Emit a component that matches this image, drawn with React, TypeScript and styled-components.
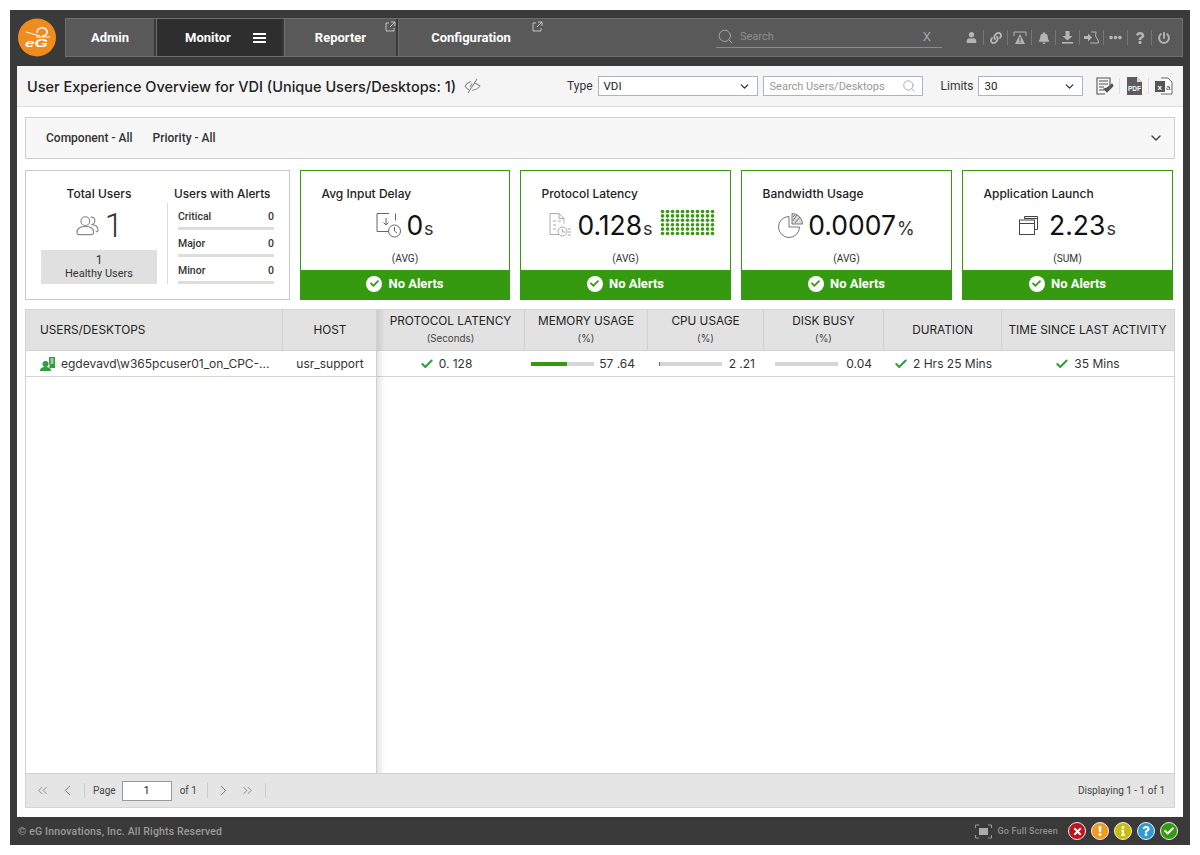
import React from "react";
import styled, { createGlobalStyle } from "styled-components";
import { Check, ChevronDown, ChevronLeft, ChevronRight, ChevronsLeft, ChevronsRight, Search as SearchIcon } from "lucide-react";
import { FaUser, FaLink, FaBell, FaEllipsisH, FaQuestion, FaPowerOff, FaCheck, FaTimes, FaExclamation, FaInfo } from "react-icons/fa";

const Global = createGlobalStyle`
  html, body { margin: 0; padding: 0; background: #fff; overflow: hidden; }
  body { font-family: Roboto, "Liberation Sans", sans-serif; color: #222; }
  * { box-sizing: border-box; }
`;

const Wide = `Inter, Roboto, "Liberation Sans", sans-serif`;

const Frame = styled.div`
  margin: 10px;
  width: 1180px;
  height: 835px;
  background: #3a3a3a;
  padding: 8px 7px 0;
  display: flex;
  flex-direction: column;
`;

const TopRow = styled.header`
  display: flex;
  align-items: center;
  height: 39px;
  gap: 7px;
  flex: none;
`;

const LogoWrap = styled.div`
  width: 40px;
  height: 39px;
  flex: none;
  margin-left: 1px;
`;

const NavBar = styled.nav`
  flex: 1;
  min-width: 0;
  height: 39px;
  background: #595959;
  border: 1px solid #6e6e6e;
  display: flex;
  align-items: stretch;
`;

const Tab = styled.div<{ $w: number; $active?: boolean; $plain?: boolean; $pl?: number }>`
  position: relative;
  width: ${(p) => p.$w}px;
  flex: none;
  display: flex;
  align-items: center;
  justify-content: center;
  gap: 22px;
  padding-left: ${(p) => p.$pl ?? 0}px;
  color: #fff;
  font-size: 13px;
  font-weight: 700;
  background: ${(p) => (p.$active ? "#2e2e2e" : "transparent")};
  border-right: ${(p) => (p.$plain ? "none" : "2px solid #383838")};
  box-shadow: ${(p) => (p.$plain ? "none" : "1px 0 0 #6e6e6e")};
  margin-right: 1px;
`;

const ExtIcon = styled.svg`
  position: absolute;
  top: 2px;
  right: 0;
  width: 11px;
  height: 11px;
`;

const Burger = styled.span`
  display: block;
  width: 13px;
  height: 10px;
  border-top: 2px solid #fff;
  border-bottom: 2px solid #fff;
  position: relative;
  &::after {
    content: "";
    position: absolute;
    left: 0;
    right: 0;
    top: 2px;
    height: 2px;
    background: #fff;
  }
`;

const SearchBox = styled.div`
  margin-left: 172px;
  width: 226px;
  height: 29px;
  display: flex;
  align-items: center;
  border-bottom: 1px solid #8a8a8a;
  padding: 6px 8px 0 1px;
  color: #8f8f8f;
  font-size: 11px;
  gap: 6px;
`;

const SearchPlaceholder = styled.span`
  flex: 1;
`;

const ClearX = styled.span`
  font-size: 13px;
  color: #a5a5a5;
  margin-right: 3px;
`;

const ToolIcons = styled.div`
  display: flex;
  align-items: center;
  margin-left: 18px;
  flex: none;
`;

const ToolCell = styled.div<{ $last?: boolean }>`
  width: 24px;
  height: 15px;
  display: flex;
  align-items: center;
  justify-content: center;
  color: #b5b5b5;
  border-right: ${(p) => (p.$last ? "none" : "1px solid #777")};
`;

const Content = styled.main`
  margin-top: 9px;
  height: 751px;
  flex: none;
  background: #fff;
  display: flex;
  flex-direction: column;
`;

const TitleBar = styled.div`
  height: 41px;
  flex: none;
  background: #f5f5f5;
  border-bottom: 1px solid #dcdcdc;
  display: flex;
  align-items: center;
  padding: 0 0 0 10px;
  font-size: 12px;
`;

const Title = styled.h1`
  margin: 0;
  font-family: ${Wide};
  width: 430px;
  font-size: 14.5px;
  font-weight: 500;
  color: #222;
  white-space: nowrap;
`;

const Eye = styled.span`
  display: inline-flex;
  margin-left: 7px;
`;

const FieldLabel = styled.label<{ $ml: number }>`
  margin-left: ${(p) => p.$ml}px;
  font-size: 12px;
  color: #333;
`;

const Select = styled.div<{ $w: number }>`
  width: ${(p) => p.$w}px;
  height: 20px;
  margin-left: 5px;
  background: #fff;
  border: 1px solid #aab4c4;
  display: flex;
  align-items: center;
  justify-content: space-between;
  padding: 0 6px 0 5px;
  font-size: 11.5px;
  color: #222;
`;

const SearchField = styled.div`
  width: 160px;
  height: 20px;
  margin-left: 5px;
  background: #fff;
  border: 1px solid #aab4c4;
  display: flex;
  align-items: center;
  justify-content: space-between;
  padding: 0 6px;
  font-size: 11px;
  color: #999;
`;

const Exports = styled.div`
  display: flex;
  align-items: center;
  margin-left: 8px;
`;

const ExportCell = styled.div<{ $last?: boolean }>`
  width: 29px;
  height: 16px;
  display: flex;
  align-items: center;
  justify-content: center;
  border-right: ${(p) => (p.$last ? "none" : "1px solid #ddd")};
`;

const Body = styled.div`
  flex: 1;
  padding: 10px 8px 9px;
  display: flex;
  flex-direction: column;
  min-height: 0;
`;

const FilterBar = styled.div`
  height: 42px;
  flex: none;
  background: #f7f7f7;
  border: 1px solid #d0d0d0;
  display: flex;
  align-items: center;
  padding: 0 10px 0 20px;
  gap: 20px;
  font-size: 12px;
  font-weight: 500;
  color: #333;
`;

const FilterSpacer = styled.span`
  flex: 1;
`;

const Cards = styled.section`
  margin-top: 11px;
  height: 129px;
  flex: none;
  display: grid;
  grid-template-columns: 265px 210px 211px 211px 211px;
  gap: 10px;
  width: 1148px;
`;

const SummaryCard = styled.div`
  border: 1px solid #c8c8c8;
  display: flex;
  padding: 15px;
`;

const SummaryLeft = styled.div`
  width: 116px;
  display: flex;
  flex-direction: column;
  align-items: center;
`;

const CardHead = styled.div`
  font-family: ${Wide};
  font-size: 12px;
  font-weight: 500;
  color: #222;
  line-height: 16px;
  white-space: nowrap;
`;

const TotalRow = styled.div`
  display: flex;
  align-items: center;
  gap: 5px;
  height: 39px;
  margin-top: 4px;
  color: #8a8a8a;
`;

const TotalNum = styled.span`
  font-size: 33px;
  font-weight: 300;
  color: #333;
  line-height: 1;
`;

const Healthy = styled.div`
  margin-top: auto;
  width: 116px;
  height: 34px;
  background: #e0e0e0;
  display: flex;
  flex-direction: column;
  align-items: center;
  justify-content: center;
  font-size: 11px;
  color: #333;
  line-height: 14px;
`;

const HealthyNum = styled.span`
  font-size: 12px;
`;

const SummaryRight = styled.div`
  flex: 1;
  margin-left: 10px;
  display: flex;
  flex-direction: column;
`;

const AlertHead = styled(CardHead)`
  margin-left: 7px;
  font-size: 11.8px;
`;

const AlertList = styled.div`
  flex: 1;
  border-left: 1px solid #ddd;
  padding-left: 10px;
  margin-top: 1px;
  display: flex;
  flex-direction: column;
  justify-content: flex-end;
`;

const AlertRow = styled.div`
  height: 27px;
  display: flex;
  justify-content: space-between;
  align-items: center;
  font-size: 10.5px;
  font-weight: 500;
  color: #333;
  border-bottom: 3px solid #ddd;
  padding-top: 3px;
`;

const MetricCard = styled.div`
  border: 1px solid #359a10;
  display: flex;
  flex-direction: column;
`;

const MetricHead = styled(CardHead)`
  padding: 15px 0 0 20.500px;
  flex: none;
`;

const MetricValue = styled.div<{ $pl?: number }>`
  flex: none;
  height: 38px;
  margin-top: 4px;
  padding-left: ${(p) => p.$pl ?? 0}px;
  display: flex;
  align-items: center;
  justify-content: center;
  gap: 5px;
`;

const BigNum = styled.span`
  font-family: ${Wide};
  font-size: 26.5px;
  font-weight: 400;
  color: #111;
  line-height: 1;
`;

const Unit = styled.span`
  font-size: 18px;
  color: #333;
  margin-left: 1px;
`;

const DotsWrap = styled.span`
  display: inline-flex;
  margin: 0 0 6px 2px;
`;

const Agg = styled.div`
  flex: none;
  margin-top: 8px;
  text-align: center;
  font-size: 10.2px;
  line-height: 13px;
  color: #333;
`;

const AlertBand = styled.div`
  margin-top: auto;
  height: 29px;
  padding-bottom: 2px;
  background: #359a10;
  display: flex;
  align-items: center;
  justify-content: center;
  gap: 6px;
  color: #fff;
  font-size: 13px;
  font-weight: 700;
`;

const CheckDisc = styled.span`
  width: 16px;
  height: 16px;
  border-radius: 50%;
  background: #fff;
  color: #359a10;
  display: inline-flex;
  align-items: center;
  justify-content: center;
`;

const Grid = styled.section`
  margin-top: 10px;
  flex: 1;
  min-height: 0;
  border: 1px solid #d4d4d4;
  display: flex;
  flex-direction: column;
  width: 1150px;
`;

const GridBody = styled.div`
  flex: 1;
  min-height: 0;
  display: flex;
`;

const LeftPane = styled.div`
  width: 351px;
  flex: none;
  border-right: 1px solid #cfcfcf;
`;

const RightPane = styled.div`
  flex: 1;
  min-width: 0;
  position: relative;
  &::before {
    content: "";
    position: absolute;
    top: 0;
    bottom: 0;
    left: 0;
    width: 8px;
    background: linear-gradient(to right, rgba(0, 0, 0, 0.1), rgba(0, 0, 0, 0));
    pointer-events: none;
  }
`;

const HeadRow = styled.div<{ $cols: string }>`
  display: grid;
  grid-template-columns: ${(p) => p.$cols};
  height: 41px;
  background: #e2e2e2;
  border-bottom: 1px solid #d4d4d4;
`;

const HeadCell = styled.div<{ $left?: boolean; $last?: boolean }>`
  display: flex;
  flex-direction: column;
  justify-content: center;
  align-items: ${(p) => (p.$left ? "flex-start" : "center")};
  padding-left: ${(p) => (p.$left ? "14px" : "0")};
  border-right: ${(p) => (p.$last ? "none" : "1px solid #d0d0d0")};
  font-family: ${Wide};
  font-size: 11.8px;
  color: #222;
  white-space: nowrap;
  line-height: 17px;
`;

const HeadSub = styled.span`
  font-size: 9.8px;
  color: #444;
`;

const DataRow = styled.div<{ $cols: string }>`
  display: grid;
  grid-template-columns: ${(p) => p.$cols};
  height: 26px;
  border-bottom: 1px solid #d4d4d4;
  font-family: ${Wide};
  font-size: 12px;
  color: #333;
`;

const DataCell = styled.div<{ $center?: boolean; $pl?: number; $pr?: number }>`
  display: flex;
  align-items: center;
  justify-content: ${(p) => (p.$center ? "center" : "flex-start")};
  padding-left: ${(p) => p.$pl ?? 0}px;
  padding-right: ${(p) => p.$pr ?? 0}px;
  gap: 5px;
  white-space: nowrap;
`;

const Track = styled.div`
  width: 63px;
  height: 4px;
  background: #d6d6d6;
  flex: none;
`;

const Fill = styled.div`
  height: 100%;
  background: #359a10;
`;

const BarValue = styled.span`
  flex: 1;
  text-align: right;
`;

const TickMark = styled.span`
  display: inline-flex;
  color: #2e9e3f;
`;

const Pager = styled.footer`
  height: 34px;
  flex: none;
  background: #e5e5e5;
  border-top: 1px solid #d0d0d0;
  display: flex;
  align-items: center;
  padding-left: 9px;
  color: #8a8a8a;
  font-size: 10px;
`;

const PagerBtn = styled.span<{ $w: number }>`
  width: ${(p) => p.$w}px;
  display: inline-flex;
  justify-content: center;
  color: #777;
`;

const PagerSep = styled.span<{ $ml?: number; $mr?: number }>`
  width: 1px;
  height: 15px;
  background: #ccc;
  margin: 0 ${(p) => p.$mr ?? 0}px 0 ${(p) => p.$ml ?? 0}px;
`;

const PagerText = styled.span`
  color: #444;
`;

const PageInput = styled.div`
  width: 50px;
  height: 20px;
  margin: 0 8px 0 6px;
  background: #fff;
  border: 1px solid #999;
  display: flex;
  align-items: center;
  justify-content: center;
  font-size: 11px;
  color: #222;
`;

const Showing = styled.span`
  margin-left: auto;
  padding-right: 9px;
  color: #444;
`;

const Foot = styled.footer`
  flex: 1;
  display: flex;
  align-items: center;
  padding: 0 5px 0 1px;
  font-size: 10.5px;
  font-weight: 500;
  color: #9a9a9a;
  letter-spacing: 0.17px;
`;

const FullScreen = styled.span`
  margin-left: auto;
  display: inline-flex;
  align-items: center;
  gap: 6px;
  font-size: 9px;
  color: #8f8f8f;
  margin-right: 5px;
`;

const Status = styled.span<{ $bg: string }>`
  width: 18px;
  height: 18px;
  border-radius: 50%;
  background: ${(p) => p.$bg};
  border: 1px solid #eee;
  color: #fff;
  display: inline-flex;
  align-items: center;
  justify-content: center;
  margin-left: 5px;
`;

const Logo = () => (
  <LogoWrap>
    <svg width="40" height="39" viewBox="0 0 40 39">
      <circle cx="19" cy="19.500" r="19" fill="#f08c1e" />
      <path d="M19 15 C19 9 27 8 29 13 C30 16 27 18 24 18" stroke="#fff" strokeWidth="1.500" fill="none" />
      <path d="M8 14 L22 18 M18 19 H32" stroke="#fff" strokeWidth="1" fill="none" />
      <text x="7" y="29" fontFamily="Liberation Sans, sans-serif" fontWeight="700" fontStyle="italic" fontSize="11" textLength="23" lengthAdjust="spacingAndGlyphs" fill="#fff">eG</text>
    </svg>
  </LogoWrap>
);

const Ext = () => (
  <ExtIcon viewBox="0 0 11 11" fill="none" stroke="#ccc" strokeWidth="0.9">
    <path d="M4 2H1v8h8V7M6 1h4v4M10 1L5 6" />
  </ExtIcon>
);

const EyeSlash = () => (
  <svg width="17" height="16" viewBox="0 0 17 16" fill="none" stroke="#8a8a8a" strokeWidth="1.100">
    <path d="M7 3.500C4 4.500 2 6.500 1 8c1 1.500 2 2.800 4 3.700" />
    <path d="M10 4.500c2.500 1 4.500 2.500 6 3.500-2 2.300-4.500 4-8 4.200" />
    <path d="M13 1L4 15" />
    <path d="M8 5.500L6 9" />
  </svg>
);

const WarnBox = () => (
  <svg width="14" height="14" viewBox="0 0 14 14" fill="none">
    <path d="M1 5V1h12v4" stroke="#b5b5b5" />
    <path d="M7 3l5 10H2z" fill="#b5b5b5" />
    <rect x="6.400" y="6" width="1.200" height="4" fill="#595959" />
    <rect x="6.400" y="10.600" width="1.200" height="1.200" fill="#595959" />
  </svg>
);

const DownloadI = () => (
  <svg width="13" height="13" viewBox="0 0 13 13" fill="#b5b5b5">
    <path d="M4.500 0h4v5h3L6.500 9.500 1.500 5h3z" />
    <rect x="1" y="11" width="11" height="1.600" />
  </svg>
);

const LoginI = () => (
  <svg width="16" height="13" viewBox="0 0 16 13" fill="none">
    <path d="M0 5h4V2.500L8 6.500l-4 4V8H0z" fill="#b5b5b5" />
    <path d="M7 1h5l-.5 4 3 5v2H6" stroke="#b5b5b5" strokeWidth="1" />
  </svg>
);

const UsersI = () => (
  <svg width="25" height="21" viewBox="0 0 27 24" fill="none" stroke="#8a8a8a" strokeWidth="1.300">
    <circle cx="11" cy="7" r="5" />
    <path d="M1.500 20c0-5 4-7 9.500-7s9.500 2 9.500 7c0 2-1 2.500-3 2.500H4.500c-2 0-3-.5-3-2.500z" />
    <path d="M17 2.500c3-.5 5 1 5 4 0 2-1 3.500-3 4.500 4 .5 6.500 3 6.500 6 0 1.500-1 2-2.500 2" />
  </svg>
);

const DelayI = () => (
  <svg width="25" height="25" viewBox="0 0 25 25" fill="none" stroke="#666" strokeWidth="1">
    <path d="M13 .5H1v18h11" />
    <path d="M10 5v7M7.500 9.500L10 12l2.500-2.500" />
    <path d="M19.500 .5v7" />
    <circle cx="18.500" cy="18" r="6" />
    <path d="M18.500 14v4l2.500 2" />
  </svg>
);

const LatencyI = () => (
  <svg width="24" height="25" viewBox="0 0 24 25" fill="none" stroke="#aaa" strokeWidth="1">
    <path d="M2 .5h9l5 5v5M2 .5v21h9" />
    <path d="M11 .5v5h5M5 8h3M5 12h3M5 16h3M10 8h3" />
    <circle cx="14.500" cy="18.500" r="4.500" />
    <path d="M14.500 16v3h3M20 16h3M20 19h3M20 22h3" />
  </svg>
);

const PieI = () => (
  <svg width="25" height="25" viewBox="0 0 25 25" fill="none" stroke="#777" strokeWidth="1">
    <path d="M11 3.500A10.500 10.500 0 1 0 21.500 14H11z" />
    <path d="M14 .5A10.500 10.500 0 0 1 24.500 11H14z" fill="#ddd" />
    <path d="M15 8l4-6M17 10l5-6M15 4l2-2" />
  </svg>
);

const WindowsI = () => (
  <svg width="25" height="19" viewBox="0 0 25 19" fill="none" stroke="#444" strokeWidth="1">
    <path d="M5.500 3V.5h13v13H16" />
    <rect x=".5" y="4" width="15" height="14.500" />
    <path d="M.5 7.500h15M5.500 2.500h13" />
  </svg>
);

const Dots = () => (
  <DotsWrap>
    <svg width="55" height="27" viewBox="0 0 55 27">
      {Array.from({ length: 6 }).flatMap((_, r) =>
        Array.from({ length: 11 }).map((_, c) => (
          <circle key={`${r}-${c}`} cx={2.500 + c * 5} cy={2.500 + r * 4.400} r="1.800" fill="#359a10" />
        ))
      )}
    </svg>
  </DotsWrap>
);

const UserRowI = () => (
  <svg width="16" height="16" viewBox="0 0 16 16" fill="#2e9e3f">
    <circle cx="5.500" cy="8" r="3" />
    <path d="M0 15c0-3 2-4 5.500-4s5.500 1 5.500 4z" />
    <path d="M9 1h6v11H9.500V8H9z" />
    <path d="M10.500 3h3M10.500 5h3M10.500 7h3" stroke="#fff" strokeWidth="1" />
  </svg>
);

const ExportNote = () => (
  <svg width="18" height="18" viewBox="0 0 18 18" fill="none" stroke="#555" strokeWidth="1.100">
    <path d="M14 8V1H1v16h8" />
    <path d="M3 4h9M3 7h9M3 10h5M3 13h5" />
    <path d="M8 12l3 3 6-6-1-2-5 4z" fill="#555" />
  </svg>
);

const ExportPdf = () => (
  <svg width="15" height="18" viewBox="0 0 15 18">
    <path d="M0 0h10l5 5v13H0z" fill="#5c5c5c" />
    <path d="M10 0v5h5z" fill="#ddd" />
    <text x="1" y="14" fontFamily="Liberation Sans, sans-serif" fontSize="6.500" fontWeight="700" fill="#fff">PDF</text>
  </svg>
);

const ExportXls = () => (
  <svg width="18" height="18" viewBox="0 0 18 18">
    <path d="M6 1h7l4 4v12H6" fill="#fff" stroke="#666" />
    <rect x="0" y="4" width="10" height="11" fill="#555" />
    <text x="2.500" y="12.500" fontFamily="Liberation Sans, sans-serif" fontSize="8" fontWeight="700" fill="#fff">x</text>
    <text x="11" y="13" fontFamily="Liberation Sans, sans-serif" fontSize="8" fill="#444">a</text>
  </svg>
);

const FullI = () => (
  <svg width="17" height="15" viewBox="0 0 17 15" fill="none" stroke="#999">
    <path d="M4 1H.5v3M13 1h3.500v3M4 14H.5v-3M13 14h3.500v-3" />
    <rect x="4" y="4" width="9" height="7" fill="#aaa" stroke="none" />
  </svg>
);

const Tick = () => (
  <TickMark>
    <Check size={14} strokeWidth={3.5} />
  </TickMark>
);

const BarCell = ({ pct, value, pl, pr }: { pct: number; value: string; pl: number; pr: number }) => (
  <DataCell $pl={pl} $pr={pr}>
    <Track>
      <Fill style={{ width: `${pct}%` }} />
    </Track>
    <BarValue>{value}</BarValue>
  </DataCell>
);

const leftCols = "257px 94px";
const rightCols = "148px 123px 116px 120px 118px 171px";

const metrics = [
  { title: "Avg Input Delay", num: "0", unit: "s", agg: "(AVG)", icon: <DelayI /> },
  { title: "Protocol Latency", num: "0.128", unit: "s", agg: "(AVG)", icon: <LatencyI />, dots: true },
  { title: "Bandwidth Usage", num: "0.0007", unit: "%", agg: "(AVG)", icon: <PieI /> },
  { title: "Application Launch", num: "2.23", unit: "s", agg: "(SUM)", icon: <WindowsI /> },
];

export default function App() {
  return (
    <>
      <Global />
      <Frame>
        <TopRow>
          <Logo />
          <NavBar>
            <Tab $w={90}>Admin</Tab>
            <Tab $w={127} $active $pl={12}>
              <span>Monitor</span>
              <Burger />
            </Tab>
            <Tab $w={113}>
              <span>Reporter</span>
              <Ext />
            </Tab>
            <Tab $w={144} $plain>
              <span>Configuration</span>
              <Ext />
            </Tab>
            <SearchBox>
              <SearchIcon size={17} strokeWidth={1.2} color="#b0b0b0" />
              <SearchPlaceholder>Search</SearchPlaceholder>
              <ClearX>X</ClearX>
            </SearchBox>
            <ToolIcons>
              <ToolCell><FaUser size={11} /></ToolCell>
              <ToolCell><FaLink size={12} /></ToolCell>
              <ToolCell><WarnBox /></ToolCell>
              <ToolCell><FaBell size={12} /></ToolCell>
              <ToolCell><DownloadI /></ToolCell>
              <ToolCell><LoginI /></ToolCell>
              <ToolCell><FaEllipsisH size={13} /></ToolCell>
              <ToolCell><FaQuestion size={12} /></ToolCell>
              <ToolCell $last><FaPowerOff size={12} /></ToolCell>
            </ToolIcons>
          </NavBar>
        </TopRow>

        <Content>
          <TitleBar>
            <Title>User Experience Overview for VDI (Unique Users/Desktops: 1)</Title>
            <Eye><EyeSlash /></Eye>
            <FieldLabel $ml={86}>Type</FieldLabel>
            <Select $w={160}>
              VDI
              <ChevronDown size={13} strokeWidth={2.5} color="#333" />
            </Select>
            <SearchField>
              Search Users/Desktops
              <SearchIcon size={14} strokeWidth={1.3} color="#999" />
            </SearchField>
            <FieldLabel $ml={18}>Limits</FieldLabel>
            <Select $w={105}>
              30
              <ChevronDown size={13} strokeWidth={2.5} color="#333" />
            </Select>
            <Exports>
              <ExportCell><ExportNote /></ExportCell>
              <ExportCell><ExportPdf /></ExportCell>
              <ExportCell $last><ExportXls /></ExportCell>
            </Exports>
          </TitleBar>

          <Body>
            <FilterBar>
              <span>Component - All</span>
              <span>Priority - All</span>
              <FilterSpacer />
              <ChevronDown size={16} strokeWidth={2.2} color="#444" />
            </FilterBar>

            <Cards>
              <SummaryCard>
                <SummaryLeft>
                  <CardHead>Total Users</CardHead>
                  <TotalRow>
                    <UsersI />
                    <TotalNum>1</TotalNum>
                  </TotalRow>
                  <Healthy>
                    <HealthyNum>1</HealthyNum>
                    Healthy Users
                  </Healthy>
                </SummaryLeft>
                <SummaryRight>
                  <AlertHead>Users with Alerts</AlertHead>
                  <AlertList>
                    <AlertRow><span>Critical</span><span>0</span></AlertRow>
                    <AlertRow><span>Major</span><span>0</span></AlertRow>
                    <AlertRow><span>Minor</span><span>0</span></AlertRow>
                  </AlertList>
                </SummaryRight>
              </SummaryCard>

              {metrics.map((m) => (
                <MetricCard key={m.title}>
                  <MetricHead>{m.title}</MetricHead>
                  <MetricValue $pl={m.dots ? 12 : 0}>
                    {m.icon}
                    <BigNum>{m.num}<Unit>{m.unit}</Unit></BigNum>
                    {m.dots && <Dots />}
                  </MetricValue>
                  <Agg>{m.agg}</Agg>
                  <AlertBand>
                    <CheckDisc><FaCheck size={9} /></CheckDisc>
                    No Alerts
                  </AlertBand>
                </MetricCard>
              ))}
            </Cards>

            <Grid>
              <GridBody>
                <LeftPane>
                  <HeadRow $cols={leftCols}>
                    <HeadCell $left>USERS/DESKTOPS</HeadCell>
                    <HeadCell $last>HOST</HeadCell>
                  </HeadRow>
                  <DataRow $cols={leftCols}>
                    <DataCell $pl={14}>
                      <UserRowI />
                      egdevavd\w365pcuser01_on_CPC-...
                    </DataCell>
                    <DataCell $center>usr_support</DataCell>
                  </DataRow>
                </LeftPane>
                <RightPane>
                  <HeadRow $cols={rightCols}>
                    <HeadCell>PROTOCOL LATENCY<HeadSub>(Seconds)</HeadSub></HeadCell>
                    <HeadCell>MEMORY USAGE<HeadSub>(%)</HeadSub></HeadCell>
                    <HeadCell>CPU USAGE<HeadSub>(%)</HeadSub></HeadCell>
                    <HeadCell>DISK BUSY<HeadSub>(%)</HeadSub></HeadCell>
                    <HeadCell>DURATION</HeadCell>
                    <HeadCell $last>TIME SINCE LAST ACTIVITY</HeadCell>
                  </HeadRow>
                  <DataRow $cols={rightCols}>
                    <DataCell $center $pr={10}><Tick />0. 128</DataCell>
                    <BarCell pct={57.64} value="57 .64" pl={6} pr={13} />
                    <BarCell pct={2.21} value="2 .21" pl={11} pr={9} />
                    <BarCell pct={0.04} value="0.04" pl={11} pr={12} />
                    <DataCell $center><Tick />2 Hrs 25 Mins</DataCell>
                    <DataCell $center><Tick />35 Mins</DataCell>
                  </DataRow>
                </RightPane>
              </GridBody>
              <Pager>
                <PagerBtn $w={15}><ChevronsLeft size={17} strokeWidth={1.3} /></PagerBtn>
                <PagerBtn $w={34}><ChevronLeft size={17} strokeWidth={1.3} /></PagerBtn>
                <PagerSep $mr={8} />
                <PagerText>Page</PagerText>
                <PageInput>1</PageInput>
                <PagerText>of 1</PagerText>
                <PagerSep $ml={10} />
                <PagerBtn $w={32}><ChevronRight size={17} strokeWidth={1.3} /></PagerBtn>
                <PagerBtn $w={15}><ChevronsRight size={17} strokeWidth={1.3} /></PagerBtn>
                <PagerSep $ml={10} />
                <Showing>Displaying 1 - 1 of 1</Showing>
              </Pager>
            </Grid>
          </Body>
        </Content>

        <Foot>
          © eG Innovations, Inc. All Rights Reserved
          <FullScreen><FullI />Go Full Screen</FullScreen>
          <Status $bg="#c4121c"><FaTimes size={11} /></Status>
          <Status $bg="#f29a1f"><FaExclamation size={10} /></Status>
          <Status $bg="#c9bd0a"><FaInfo size={10} /></Status>
          <Status $bg="#2f9bd6"><FaQuestion size={10} /></Status>
          <Status $bg="#359a10"><FaCheck size={10} /></Status>
        </Foot>
      </Frame>
    </>
  );
}
